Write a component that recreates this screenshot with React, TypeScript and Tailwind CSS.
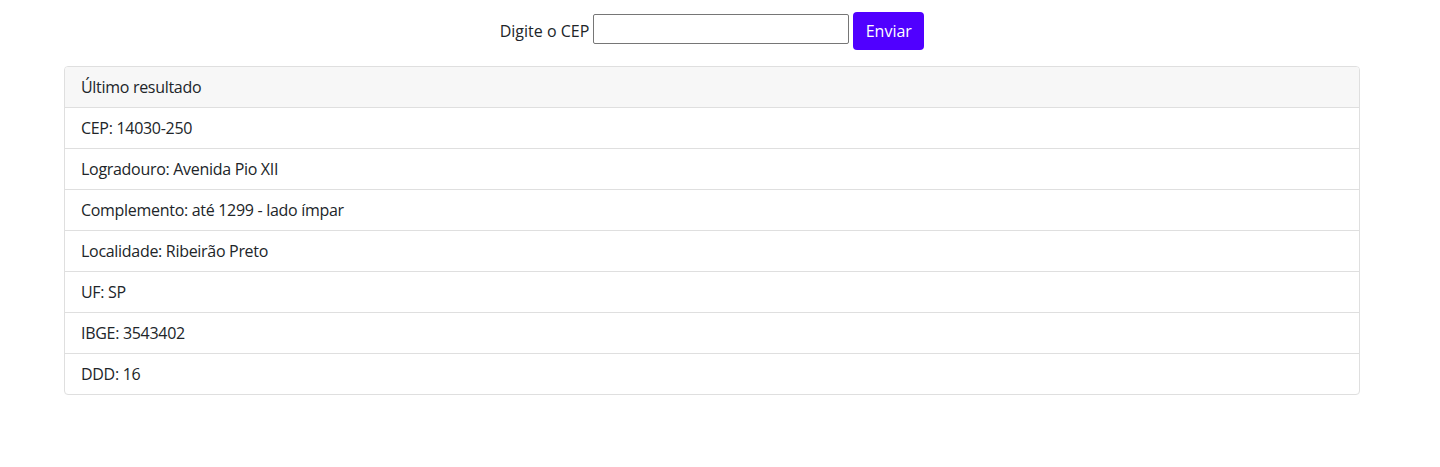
import React from 'react';

const App: React.FC = () => {
  const rows = [
    'CEP: 14030-250',
    'Logradouro: Avenida Pio XII',
    'Complemento: até 1299 - lado ímpar',
    'Localidade: Ribeirão Preto',
    'UF: SP',
    'IBGE: 3543402',
    'DDD: 16',
  ];

  return (
    <div className="min-h-[467px] bg-white text-[#212529] font-['Open_Sans',sans-serif] text-base">
      <div className="ml-[64px] w-[1296px] pt-[12px]">
        <form
          className="flex items-start justify-center gap-[4px]"
          onSubmit={(e) => e.preventDefault()}
        >
          <label htmlFor="cep" className="mt-[7px] leading-6">Digite o CEP</label>
          <input
            id="cep"
            type="text"
            className="mt-[2px] h-[30px] w-[256px] rounded-[2px] border border-[#767676] px-1"
          />
          <button
            type="submit"
            className="h-[38px] w-[71px] rounded-[4px] bg-[#5000ff] leading-6 text-white"
          >
            Enviar
          </button>
        </form>

        <div className="mt-[16px] rounded-[4px] border border-[#dfdfdf] overflow-hidden tracking-[-0.3px]">
          <div className="bg-[#f7f7f7] px-4 py-2 leading-6 border-b border-[#dfdfdf]">
            Último resultado
          </div>
          {rows.map((row, index) => (
            <div
              key={index}
              className={
                index < rows.length - 1
                  ? 'px-4 py-2 leading-6 border-b border-[#dfdfdf]'
                  : 'px-4 py-2 leading-6'
              }
            >
              {row}
            </div>
          ))}
        </div>
      </div>
    </div>
  );
};

export default App;
